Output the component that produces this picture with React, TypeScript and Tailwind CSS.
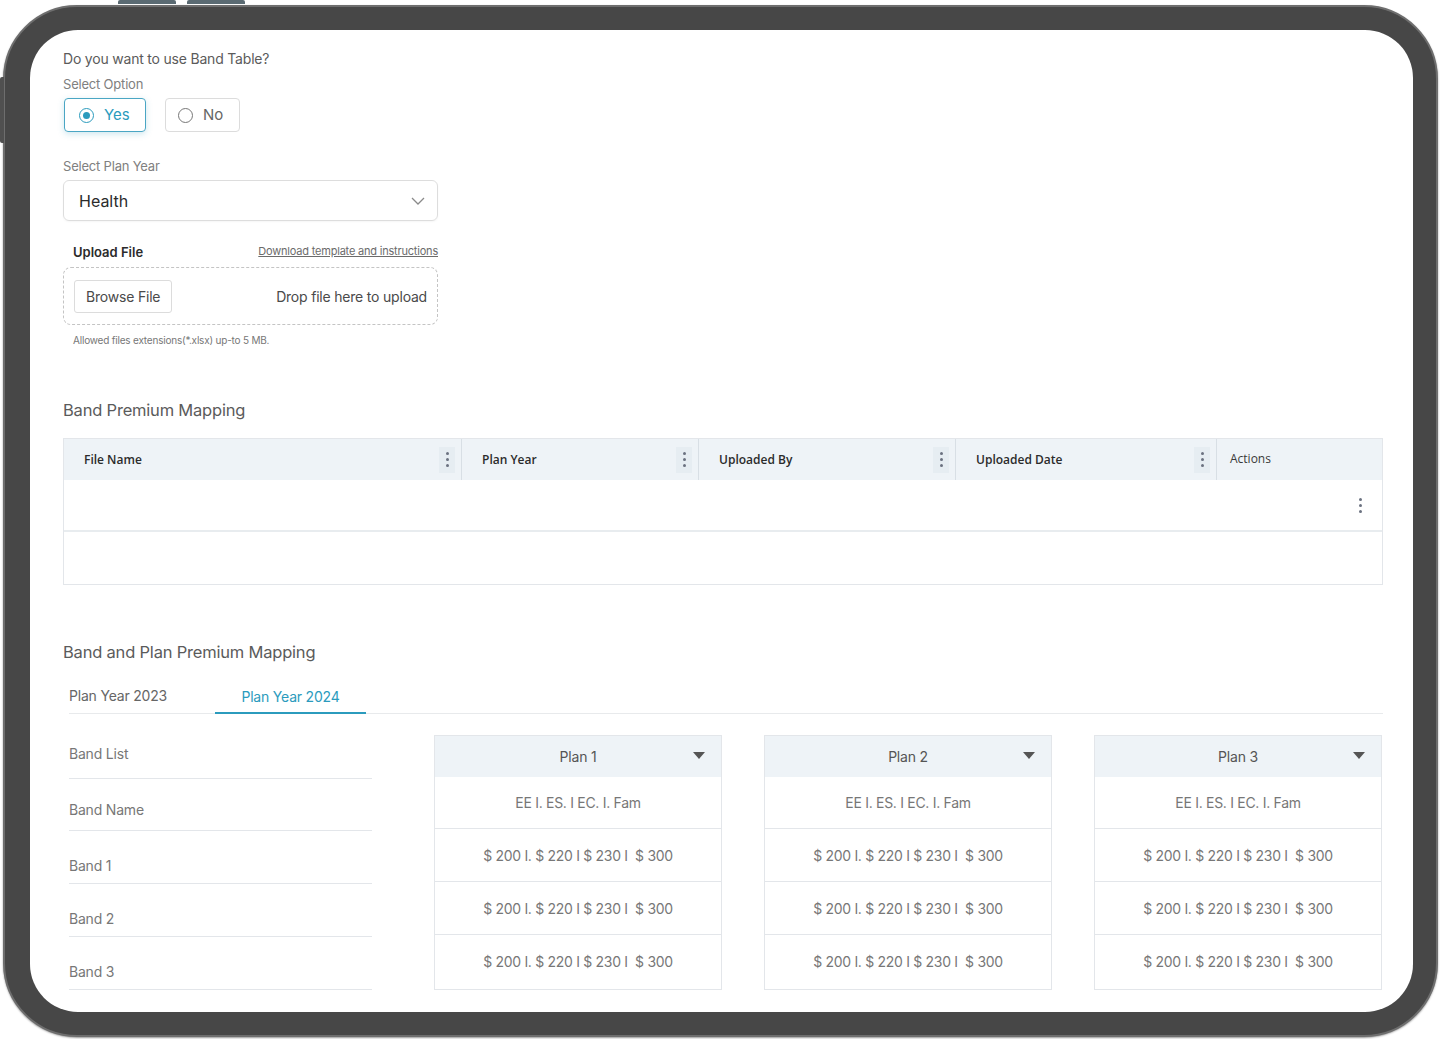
import React, { useState } from 'react';

const headCols = [
    { label: 'File Name', w: 'w-[398px]' },
    { label: 'Plan Year', w: 'w-[237px]' },
    { label: 'Uploaded By', w: 'w-[257px]' },
    { label: 'Uploaded Date', w: 'w-[261px]' },
];

const bands = ['Band List', 'Band Name', 'Band 1', 'Band 2', 'Band 3'];
const plans = ['Plan 1', 'Plan 2', 'Plan 3'];
const price = '$ 200 I. $ 220 I $ 230 I  $ 300';

const Kebab: React.FC<{ bg?: boolean }> = ({ bg }) => (
    <div className={`flex h-[26px] w-[16px] flex-col items-center justify-center gap-[3px] ${bg ? 'bg-[#e6edf2]' : ''}`}>
        <span className="h-[3px] w-[3px] rounded-full bg-[#6b7280]" />
        <span className="h-[3px] w-[3px] rounded-full bg-[#6b7280]" />
        <span className="h-[3px] w-[3px] rounded-full bg-[#6b7280]" />
    </div>
);

const App: React.FC = () => {
    const [choice, setChoice] = useState('yes');
    const [tab, setTab] = useState(2024);

    return (
        <div className="min-h-[1039px] w-[1440px] bg-white pl-[3px] pt-[5px]" style={{ fontFamily: 'Inter, "Noto Sans", sans-serif' }}>
            <div className="relative h-[1032px] w-[1435px] rounded-[74px] border-[2px] border-[#6e6e6e] bg-[#474747] pb-[23px] pl-[25px] pr-[23px] pt-[23px] shadow-[0_1px_2px_rgba(0,0,0,0.4)]">
                {/* hardware buttons */}
                <div className="absolute -top-[7px] left-[113px] h-[4px] w-[58px] rounded-t-[2px] bg-[#5a6a72]" />
                <div className="absolute -top-[7px] left-[182px] h-[4px] w-[58px] rounded-t-[2px] bg-[#5a6a72]" />
                <div className="absolute -left-[5px] top-[70px] h-[66px] w-[4px] rounded-l-[2px] bg-[#505050]" />

                <div className="h-full w-full overflow-hidden rounded-[48px] bg-white pl-[33px] pr-[30px] pt-[19px]">
                    {/* band table question */}
                    <p className="text-[14px] leading-[20px] tracking-[-0.2px] text-[#5b5b5b]">Do you want to use Band Table?</p>
                    <p className="mt-[6px] text-[13px] leading-[18px] tracking-[-0.2px] text-[#808080]">Select Option</p>
                    <div className="mt-[5px] flex gap-[19px] pl-[1px]">
                        <button
                            onClick={() => setChoice('yes')}
                            className={`flex h-[34px] w-[82px] items-center gap-[10px] rounded-[4px] border pl-[14px] text-[15px] ${choice === 'yes' ? 'border-[#4aa6c4] text-[#2b9bbd] shadow-[0_2px_6px_rgba(58,160,192,0.25)]' : 'border-[#dcdcdc] text-[#666]'}`}
                        >
                            <span className={`flex h-[15px] w-[15px] items-center justify-center rounded-full border-[1.5px] ${choice === 'yes' ? 'border-[#2b9bbd]' : 'border-[#777]'}`}>
                                {choice === 'yes' && <span className="h-[7px] w-[7px] rounded-full bg-[#2b9bbd]" />}
                            </span>
                            Yes
                        </button>
                        <button
                            onClick={() => setChoice('no')}
                            className={`flex h-[34px] w-[75px] items-center gap-[10px] rounded-[4px] border pl-[12px] text-[15px] ${choice === 'no' ? 'border-[#4aa6c4] text-[#2b9bbd]' : 'border-[#dcdcdc] text-[#666]'}`}
                        >
                            <span className={`flex h-[15px] w-[15px] items-center justify-center rounded-full border-[1.5px] ${choice === 'no' ? 'border-[#2b9bbd]' : 'border-[#777]'}`}>
                                {choice === 'no' && <span className="h-[7px] w-[7px] rounded-full bg-[#2b9bbd]" />}
                            </span>
                            No
                        </button>
                    </div>

                    {/* plan year select */}
                    <p className="mt-[25px] text-[13px] leading-[18px] tracking-[-0.2px] text-[#808080]">Select Plan Year</p>
                    <div className="mt-[5px] flex h-[41px] w-[375px] items-center justify-between rounded-[6px] border border-[#dddddd] pl-[15px] pr-[12px] shadow-[0_1px_2px_rgba(0,0,0,0.04)]">
                        <span className="text-[16px] text-[#2b2b2b]">Health</span>
                        <svg width="14" height="8" viewBox="0 0 14 8" fill="none">
                            <path d="M1 1l6 6 6-6" stroke="#8a8a8a" strokeWidth="1.3" />
                        </svg>
                    </div>

                    {/* upload */}
                    <div className="mt-[22px] flex w-[375px] items-end justify-between pl-[10px]">
                        <span className="text-[13px] font-semibold leading-[18px] text-[#2b2b2b]">Upload File</span>
                        <a className="mb-[3px] text-[11px] leading-[14px] tracking-[-0.2px] text-[#6b6b6b] underline">Download template and instructions</a>
                    </div>
                    <div className="mt-[6px] flex h-[58px] w-[375px] items-center justify-between rounded-[8px] border-[1.5px] border-dashed border-[#c4c4c4] pl-[10px] pr-[10px]">
                        <button className="h-[33px] rounded-[3px] border border-[#dcdcdc] px-[11px] text-[14px] tracking-[-0.2px] text-[#4a4a4a]">Browse File</button>
                        <span className="text-[14px] tracking-[-0.2px] text-[#4a4a4a]">Drop file here to upload</span>
                    </div>
                    <p className="mt-[8px] pl-[10px] text-[10px] leading-[14px] tracking-[-0.2px] text-[#777]">Allowed files extensions(*.xlsx) up-to 5 MB.</p>

                    {/* band premium mapping */}
                    <h2 className="mt-[52px] text-[16.5px] leading-[22px] tracking-[-0.2px] text-[#5b5b5b]">Band Premium Mapping</h2>
                    <div className="mt-[17px] w-[1320px] border border-[#e3e6ea] pl-0">
                        <div className="flex h-[41px] bg-[#eef3f7]" style={{ fontFamily: '"Open Sans", sans-serif' }}>
                            {headCols.map((c) => (
                                <div key={c.label} className={`flex ${c.w} items-center justify-between border-r-[1.5px] border-[#d8dfe5] pl-[20px] pr-[6px]`}>
                                    <span className="text-[12px] font-semibold text-[#2b2b2b]">{c.label}</span>
                                    <Kebab bg />
                                </div>
                            ))}
                            <div className="flex flex-1 items-center pl-[13px]">
                                <span className="-mt-[2px] text-[12px] text-[#3a3a3a]">Actions</span>
                            </div>
                        </div>
                        <div className="flex h-[52px] items-center justify-end border-b-[2px] border-[#e8ecef] pr-[14px]">
                            <Kebab />
                        </div>
                        <div className="h-[52px]" />
                    </div>

                    {/* band and plan premium mapping */}
                    <h2 className="mt-[56px] text-[16.5px] leading-[22px] tracking-[-0.2px] text-[#5b5b5b]">Band and Plan Premium Mapping</h2>
                    <div className="ml-[6px] mt-[20px] flex w-[1314px] border-b border-[#e8eaec]">
                        <button
                            onClick={() => setTab(2023)}
                            className={`h-[30px] w-[146px] pb-[6px] text-left text-[14px] tracking-[-0.2px] ${tab === 2023 ? 'text-[#2b9bbd]' : 'text-[#666]'}`}
                        >
                            Plan Year 2023
                        </button>
                        <button
                            onClick={() => setTab(2024)}
                            className={`-mb-[1px] h-[31px] w-[151px] border-b-[2px] pb-[3px] text-[14px] tracking-[-0.2px] ${tab === 2024 ? 'border-[#2b9bbd] text-[#2b9bbd]' : 'border-transparent text-[#666]'}`}
                        >
                            Plan Year 2024
                        </button>
                    </div>

                    <div className="mt-[21px] flex">
                        <div className="ml-[6px] w-[303px] shrink-0">
                            {bands.map((b, i) => (
                                <div key={b} className={`flex items-end border-b-[1.5px] border-[#e3e6ea] text-[14px] tracking-[-0.2px] text-[#777] ${i === 0 ? 'h-[44px] pb-[14px]' : i === 1 ? 'h-[52px] pb-[10px]' : 'h-[53px] pb-[7px]'}`}>
                                    {b}
                                </div>
                            ))}
                        </div>
                        <div className="ml-[62px] flex shrink-0 gap-[42px]">
                            {plans.map((p) => (
                                <div key={p} className="w-[288px] border border-[#e3e6ea]">
                                    <div className="relative flex h-[41px] items-center justify-center bg-[#eef3f7] text-[14px] tracking-[-0.2px] text-[#555]">
                                        {p}
                                        <svg className="absolute right-[16px] top-[16px]" width="12" height="8" viewBox="0 0 12 8">
                                            <path d="M0 0h12L6 7z" fill="#555" />
                                        </svg>
                                    </div>
                                    <div className="flex h-[52px] items-center justify-center border-b-[1.5px] border-[#e3e6ea] text-[14px] tracking-[-0.3px] text-[#777]">EE I. ES. I EC. I. Fam</div>
                                    {[0, 1, 2].map((r) => (
                                        <div key={r} className={`flex h-[53px] items-center justify-center whitespace-pre text-[14px] tracking-[-0.3px] text-[#777] ${r < 2 ? 'border-b-[1.5px] border-[#e3e6ea]' : ''}`}>
                                            {price}
                                        </div>
                                    ))}
                                </div>
                            ))}
                        </div>
                    </div>
                </div>
            </div>
        </div>
    );
};

export default App;
